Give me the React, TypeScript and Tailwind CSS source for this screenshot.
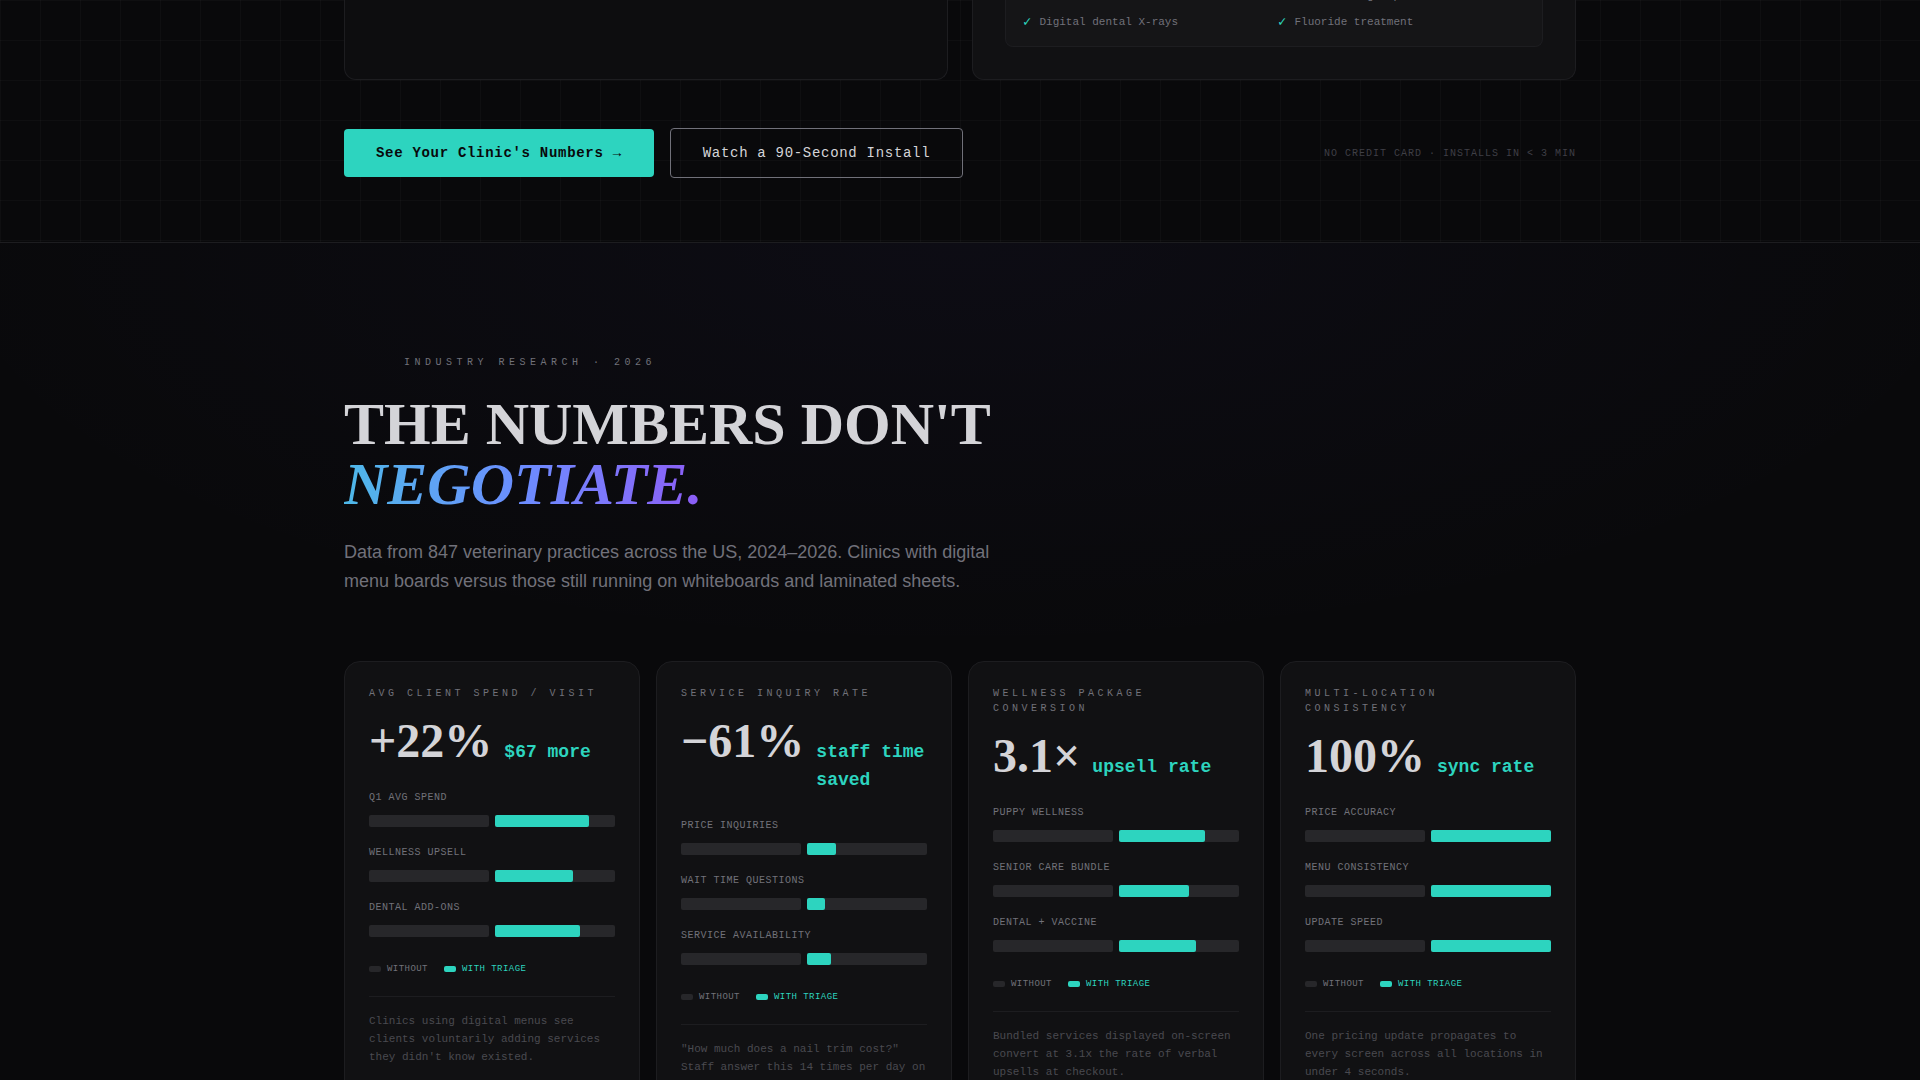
import React from "react";
import { clsx } from "clsx";

const MONO = "font-['Liberation_Mono','DejaVu_Sans_Mono',monospace]";
const SERIF = "font-['Liberation_Serif',serif]";
const SANS = "font-['Liberation_Sans',sans-serif]";

type Bar = { label: string; value: number };

type Stat = {
  label: string;
  figure: string;
  unit: string;
  bars: Bar[];
  note: string;
};

const services = [
  "Full oral exam",
  "Ultrasonic group",
  "Digital dental X-rays",
  "Fluoride treatment",
];

const stats: Stat[] = [
  {
    label: "Avg client spend / visit",
    figure: "+22%",
    unit: "$67 more",
    bars: [
      { label: "Q1 avg spend", value: 78 },
      { label: "Wellness upsell", value: 65 },
      { label: "Dental add-ons", value: 71 },
    ],
    note: "Clinics using digital menus see clients voluntarily adding services they didn't know existed.",
  },
  {
    label: "Service inquiry rate",
    figure: "−61%",
    unit: "staff time saved",
    bars: [
      { label: "Price inquiries", value: 24 },
      { label: "Wait time questions", value: 15 },
      { label: "Service availability", value: 20 },
    ],
    note: "\"How much does a nail trim cost?\" Staff answer this 14 times per day on average.",
  },
  {
    label: "Wellness package conversion",
    figure: "3.1×",
    unit: "upsell rate",
    bars: [
      { label: "Puppy wellness", value: 72 },
      { label: "Senior care bundle", value: 58 },
      { label: "Dental + vaccine", value: 64 },
    ],
    note: "Bundled services displayed on-screen convert at 3.1x the rate of verbal upsells at checkout.",
  },
  {
    label: "Multi-location consistency",
    figure: "100%",
    unit: "sync rate",
    bars: [
      { label: "Price accuracy", value: 100 },
      { label: "Menu consistency", value: 100 },
      { label: "Update speed", value: 100 },
    ],
    note: "One pricing update propagates to every screen across all locations in under 4 seconds.",
  },
];

function CompareBar({ label, value }: Bar) {
  return (
    <div>
      <div className="mb-[10px] text-[10px] leading-[15px] tracking-[0.05em] uppercase text-[#71717a]">{label}</div>
      <div className="grid grid-cols-2 gap-1.5">
        <div className="h-3 rounded-xs bg-[#27272a]" />
        <div className="h-3 rounded-xs bg-[#27272a]">
          <div className="h-full rounded-xs bg-[#2dd4bf]" style={{ width: `${value}%` }} />
        </div>
      </div>
    </div>
  );
}

function StatCard({ label, figure, unit, bars, note }: Stat) {
  return (
    <article className={clsx(MONO, "rounded-2xl border border-[#1d1d20] bg-[#111113] p-6")}>
      <h3 className="text-[10px] leading-[15px] tracking-[0.35em] uppercase text-[#71717a]">{label}</h3>
      <div className="mt-4 flex items-baseline gap-3">
        <span className={clsx(SERIF, "text-5xl leading-none font-bold text-[#d4d4d8]")}>{figure}</span>
        <span className="text-lg font-bold text-[#2dd4bf]">{unit}</span>
      </div>

      <div className="mt-6 space-y-[18px]">
        {bars.map((bar) => (
          <CompareBar key={bar.label} {...bar} />
        ))}
      </div>

      <div className="mt-[25px] flex gap-4 text-[9px] leading-[14px] tracking-[0.05em] uppercase">
        <span className="flex items-center gap-1.5 text-[#71717a]">
          <i className="h-1.5 w-3 rounded-xs bg-[#27272a]" />
          Without
        </span>
        <span className="flex items-center gap-1.5 text-[#2dd4bf]">
          <i className="h-1.5 w-3 rounded-xs bg-[#2dd4bf]" />
          With Triage
        </span>
      </div>

      <p className="mt-5 border-t border-[#1d1d20] pt-[15px] text-[11px] leading-[18px] text-[#4a4a50]">{note}</p>
    </article>
  );
}

function Showcase() {
  return (
    <section className="border-b border-[#1d1d20] bg-[linear-gradient(rgba(255,255,255,0.025)_1px,transparent_1px),linear-gradient(90deg,rgba(255,255,255,0.025)_1px,transparent_1px)] bg-size-[40px_40px] pb-16">
      <div className="mx-auto max-w-7xl px-6">
        <div className="grid grid-cols-2 gap-6">
          <div className="rounded-b-xl border border-t-0 border-[#1d1d20] bg-[#0d0d0f]" />
          <div className="rounded-b-xl border border-t-0 border-[#1d1d20] bg-[#111113] px-8 pb-8">
            <div className="flex h-[47px] flex-col justify-end overflow-hidden rounded-b-lg border border-t-0 border-[#1d1d20] bg-[#151517] px-[17px] pb-4">
              <ul className={clsx(MONO, "grid grid-cols-2 gap-x-2 gap-y-[10px] text-[11px] leading-4 text-[#71717a]")}>
                {services.map((service) => (
                  <li key={service} className="flex items-center gap-2">
                    <span className="text-[14px] leading-4 text-[#2dd4bf]">✓</span>
                    {service}
                  </li>
                ))}
              </ul>
            </div>
          </div>
        </div>

        <div className={clsx(MONO, "mt-12 flex items-center gap-4")}>
          <button className="h-12 rounded-sm bg-[#2dd4bf] px-8 text-sm font-bold tracking-[0.05em] text-[#09090b]">
            See Your Clinic's Numbers →
          </button>
          <button className="h-[50px] rounded-sm border border-[#71717a] px-8 text-sm tracking-[0.05em] text-[#d4d4d8]">
            Watch a 90-Second Install
          </button>
          <span className="ml-auto text-[10px] tracking-[0.1em] uppercase text-[#3f3f46]">
            No credit card · Installs in &lt; 3 min
          </span>
        </div>
      </div>
    </section>
  );
}

function Research() {
  return (
    <section className="bg-[radial-gradient(ellipse_55%_42%_at_top,rgba(112,92,246,0.04),transparent)] py-28">
      <div className="mx-auto max-w-7xl px-6">
        <p className={clsx(MONO, "mb-6 pl-15 text-[10px] leading-[15px] tracking-[0.45em] uppercase text-[#71717a]")}>
          Industry research · 2026
        </p>
        <h2 className={clsx(SERIF, "text-6xl leading-none font-bold uppercase text-[#d4d4d8]")}>
          The numbers don't
          <br />
          <em className="bg-linear-to-r from-[#4db8e8] via-[#6b8cff] to-[#8b5cf6] bg-clip-text text-transparent">
            negotiate.
          </em>
        </h2>
        <p className={clsx(SANS, "mt-6 max-w-2xl text-lg leading-relaxed text-[#71717a]")}>
          Data from 847 veterinary practices across the US, 2024–2026. Clinics with digital menu boards versus those
          still running on whiteboards and laminated sheets.
        </p>

        <div className="mt-16 grid grid-cols-4 gap-4">
          {stats.map((stat) => (
            <StatCard key={stat.label} {...stat} />
          ))}
        </div>
      </div>
    </section>
  );
}

export default function App() {
  return (
    <main className="min-h-screen bg-[#09090b]">
      <Showcase />
      <Research />
    </main>
  );
}
